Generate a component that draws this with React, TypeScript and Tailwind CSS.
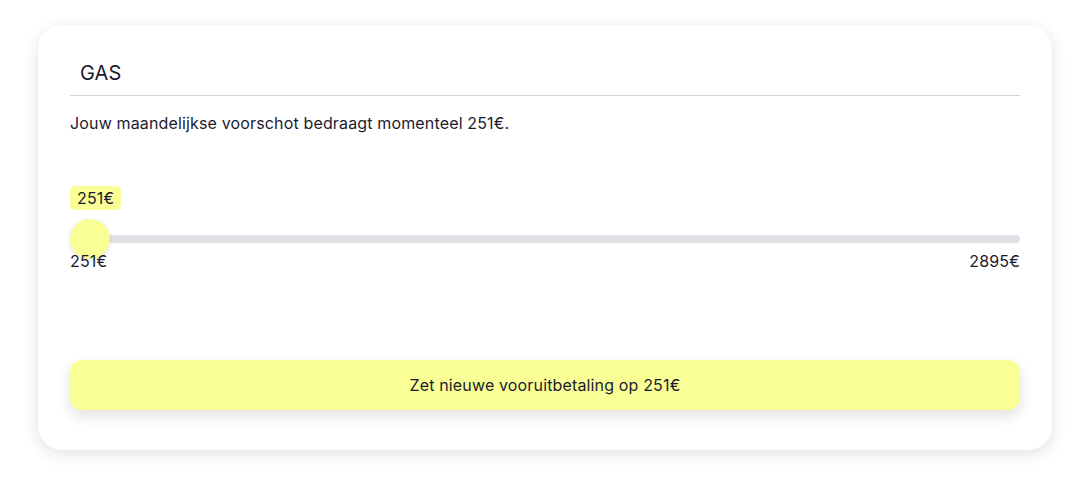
export default function App() {
  const min = 251;
  const max = 2895;
  const value = 251;
  const pct = (value - min) / (max - min);

  return (
    <div
      className="min-h-screen bg-white pl-[38px] pr-[31px] pt-[25px] pb-[33px] text-[#1c1b2e] tracking-[0.15px]"
      style={{ fontFamily: "Inter, 'Liberation Sans', sans-serif" }}
    >
      <div className="rounded-[24px] bg-white px-[32px] pt-[35px] pb-[40px] shadow-[0_4px_16px_rgba(0,0,0,0.12)]">
        <div className="border-b border-[#d4d4d8] pb-[9px] pl-[10px] text-[20px] leading-[26px]">
          GAS
        </div>
        <p className="mt-[16px] text-[16px] leading-[22px]">
          Jouw maandelijkse voorschot bedraagt momenteel {value}€.
        </p>

        <div className="mt-[52px]">
          <span className="inline-block rounded-[5px] bg-[#f9ff95] px-[7px] text-[16px] leading-[24px]">
            {value}€
          </span>
          <div className="relative mt-[9px] h-[40px]">
            <div className="absolute left-0 right-0 top-[16px] h-[8px] rounded-full bg-[#dfe1e6]" />
            <div
              className="absolute top-0 h-[40px] w-[40px] rounded-full bg-[#f9ff95] shadow-[0_1px_4px_rgba(0,0,0,0.12)]"
              style={{ left: `calc(${pct * 100}% - ${pct * 40}px)` }}
            />
          </div>
          <div className="relative -mt-[10px] flex justify-between text-[16px] leading-[24px]">
            <span>{min}€</span>
            <span>{max}€</span>
          </div>
        </div>

        <button className="mt-[87px] h-[50px] w-full rounded-[12px] bg-[#f9ff95] text-[16px] shadow-[0_6px_14px_rgba(0,0,0,0.12)]">
          Zet nieuwe vooruitbetaling op {value}€
        </button>
      </div>
    </div>
  );
}
